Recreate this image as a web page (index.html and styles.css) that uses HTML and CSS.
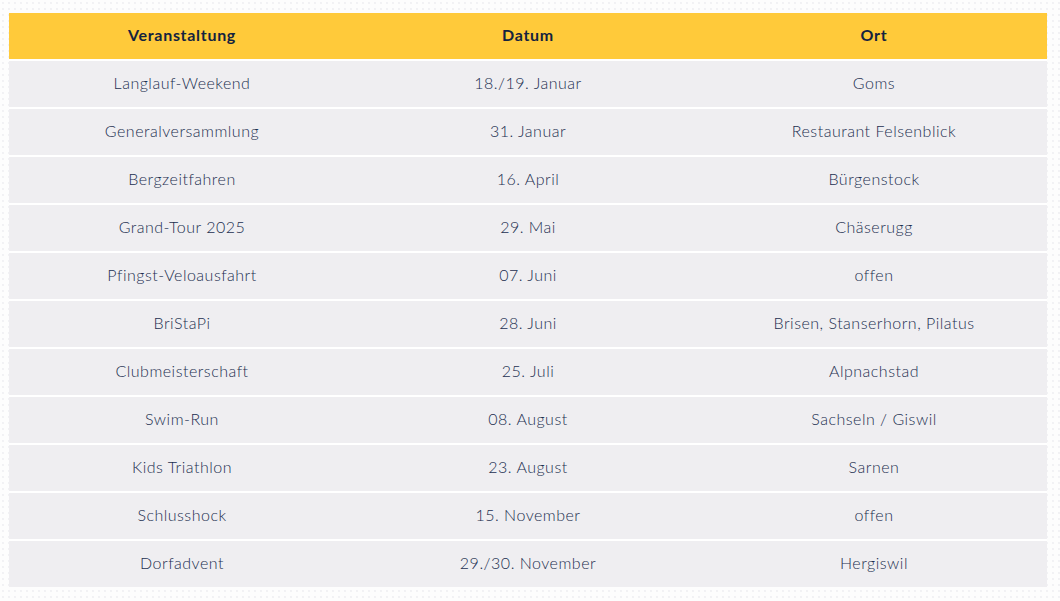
FILE: index.html
```html
<!DOCTYPE html>
<html lang="de">
<head>
<meta charset="utf-8">
<title>Veranstaltungen</title>
<link rel="stylesheet" href="styles.css">
</head>
<body>
<div class="wrap">
<table class="events">
<thead>
<tr><th>Veranstaltung</th><th>Datum</th><th>Ort</th></tr>
</thead>
<tbody>
<tr><td>Langlauf-Weekend</td><td>18./19. Januar</td><td>Goms</td></tr>
<tr><td>Generalversammlung</td><td>31. Januar</td><td>Restaurant Felsenblick</td></tr>
<tr><td>Bergzeitfahren</td><td>16. April</td><td>Bürgenstock</td></tr>
<tr><td>Grand-Tour 2025</td><td>29. Mai</td><td>Chäserugg</td></tr>
<tr><td>Pfingst-Veloausfahrt</td><td>07. Juni</td><td>offen</td></tr>
<tr><td>BriStaPi</td><td>28. Juni</td><td>Brisen, Stanserhorn, Pilatus</td></tr>
<tr><td>Clubmeisterschaft</td><td>25. Juli</td><td>Alpnachstad</td></tr>
<tr><td>Swim-Run</td><td>08. August</td><td>Sachseln / Giswil</td></tr>
<tr><td>Kids Triathlon</td><td>23. August</td><td>Sarnen</td></tr>
<tr><td>Schlusshock</td><td>15. November</td><td>offen</td></tr>
<tr><td>Dorfadvent</td><td>29./30. November</td><td>Hergiswil</td></tr>
</tbody>
</table>
</div>
</body>
</html>
```
FILE: styles.css
```css
html, body {
  margin: 0;
  padding: 0;
}
body {
  background-color: #fdfdfd;
  background-image: radial-gradient(circle, #ececf0 0.6px, transparent 0.9px);
  background-size: 6px 6px;
  font-family: Lato, "Open Sans", "Liberation Sans", sans-serif;
}
.wrap {
  padding: 13px 13px 0 9px;
}
.events {
  width: 1038px;
  border-collapse: collapse;
  table-layout: fixed;
}
.events th,
.events td {
  width: 33.333%;
  text-align: center;
  padding: 0 0 4px 0;
}
.events th {
  background: #ffca3a;
  color: #14233f;
  font-weight: 700;
  font-size: 16px;
  letter-spacing: 0.7px;
  height: 42px;
}
.events td {
  background: #efeef1;
  color: #1c2f50;
  font-weight: 300;
  font-size: 16px;
  letter-spacing: 0.5px;
  height: 42px;
  border-top: 2px solid #ffffff;
}
```
